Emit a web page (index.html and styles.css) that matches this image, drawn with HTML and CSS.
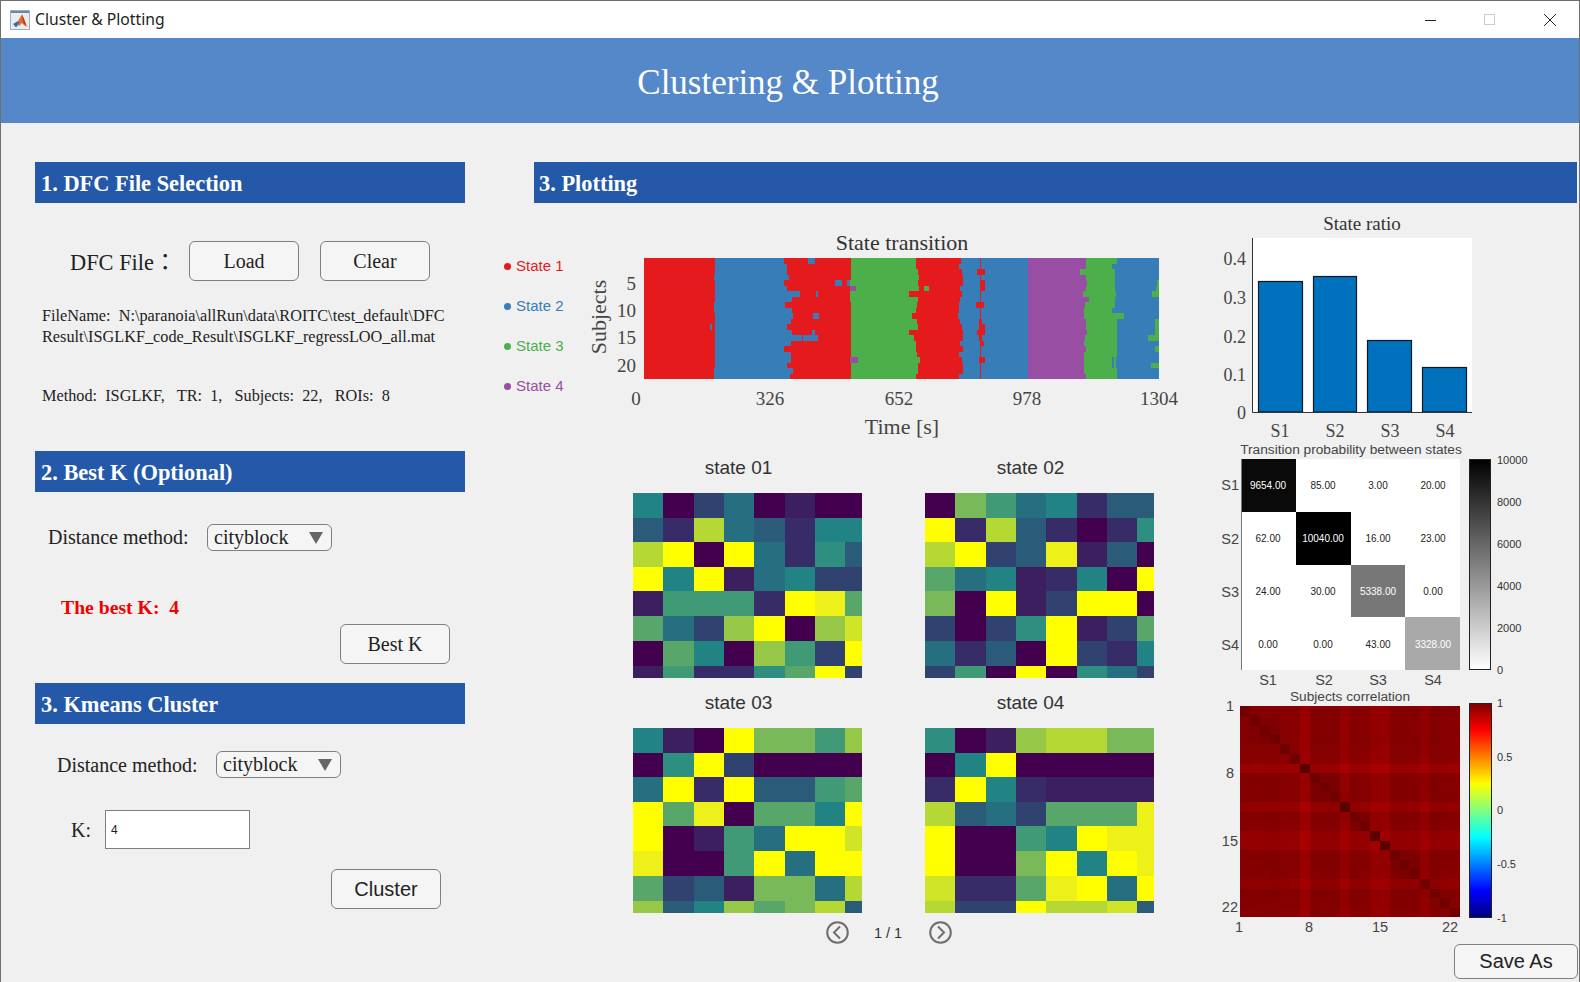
FILE: index.html
```html
<!DOCTYPE html>
<html lang="en">
<head>
  <meta charset="UTF-8">
  <title>Cluster &amp; Plotting</title>
  <link rel="stylesheet" href="styles.css">
</head>
<body>
<div class="window">
  <div class="titlebar">
    <svg class="app-icon" width="20" height="20" viewBox="0 0 20 20">
      <rect x="0.5" y="0.5" width="19" height="19" fill="#e8edf2" stroke="#a3adb8"/>
      <rect x="1" y="1" width="18" height="2" fill="#6488b0"/>
      <path d="M3 14 L8 11 L10 12.5 L8 15 L6 17.5 Z" fill="#3f6c9c"/>
      <path d="M8 11 L12 4.5 L14 9 L16.5 15.5 L18 17 L14.5 15.5 L12 13 L9 16 L8 15 L10 12.5 Z" fill="#e8682a"/>
      <path d="M12 4.5 L14 9 L16.5 15.5 L13.5 13.5 L12.5 9 Z" fill="#c5391b"/>
    </svg>
    <span class="app-title">Cluster &amp; Plotting</span>
    <div class="win-buttons">
      <svg width="12" height="12" viewBox="0 0 12 12"><path d="M0 6.5H11" stroke="#222" fill="none"/></svg>
      <svg width="12" height="12" viewBox="0 0 12 12"><rect x="0.5" y="0.5" width="10" height="10" stroke="#ccc" fill="none"/></svg>
      <svg width="14" height="14" viewBox="0 0 14 14"><path d="M1 1L13 13M13 1L1 13" stroke="#222" fill="none"/></svg>
    </div>
  </div>

  <div class="banner">Clustering &amp; Plotting</div>

  <div class="main">
    <div class="left-panel">
      <div class="section-head">1. DFC File Selection</div>
      <div class="file-row">
        <span class="label">DFC File<span class="cjk-colon">：</span></span>
        <button class="btn">Load</button>
        <button class="btn">Clear</button>
      </div>
      <p class="info file-name">FileName:&nbsp; N:\paranoia\allRun\data\ROITC\test_default\DFC<br>Result\ISGLKF_code_Result\ISGLKF_regressLOO_all.mat</p>
      <p class="info method">Method:&nbsp; ISGLKF,&nbsp;&nbsp; TR:&nbsp; 1,&nbsp;&nbsp; Subjects:&nbsp; 22,&nbsp;&nbsp; ROIs:&nbsp; 8</p>

      <div class="section-head head-k">2. Best K (Optional)</div>
      <div class="method-row row-k">
        <span class="label">Distance method:</span>
        <div class="dropdown"><span>cityblock</span><i class="arrow"></i></div>
      </div>
      <p class="best-k">The best K:&nbsp; 4</p>
      <button class="btn btn-best">Best K</button>

      <div class="section-head head-cluster">3. Kmeans Cluster</div>
      <div class="method-row row-cluster">
        <span class="label">Distance method:</span>
        <div class="dropdown"><span>cityblock</span><i class="arrow"></i></div>
      </div>
      <div class="k-row">
        <span class="label">K:</span>
        <input class="k-input" type="text" value="4">
      </div>
      <button class="btn btn-cluster">Cluster</button>
    </div>

    <div class="right-panel">
      <div class="section-head head-plot">3. Plotting</div>
      <div class="plot-area">
        <ul class="legend">
          <li class="s1">State 1</li>
          <li class="s2">State 2</li>
          <li class="s3">State 3</li>
          <li class="s4">State 4</li>
        </ul>

        <div class="center-col">
          <svg class="chart serif" width="630" height="220" viewBox="570 225 630 220">
            <g id="transition" shape-rendering="crispEdges"></g>
            <text class="ttl" x="902" y="250" text-anchor="middle">State transition</text>
            <text class="tk" x="636" y="290" text-anchor="end">5</text>
            <text class="tk" x="636" y="317" text-anchor="end">10</text>
            <text class="tk" x="636" y="344" text-anchor="end">15</text>
            <text class="tk" x="636" y="372" text-anchor="end">20</text>
            <text class="tk" x="636" y="405" text-anchor="middle">0</text>
            <text class="tk" x="770" y="405" text-anchor="middle">326</text>
            <text class="tk" x="899" y="405" text-anchor="middle">652</text>
            <text class="tk" x="1027" y="405" text-anchor="middle">978</text>
            <text class="tk" x="1159" y="405" text-anchor="middle">1304</text>
            <text class="lbl" x="902" y="434" text-anchor="middle">Time [s]</text>
            <text class="lbl" transform="translate(606 317) rotate(-90)" text-anchor="middle">Subjects</text>
          </svg>

          <div class="heat-grid">
            <div class="heat-card"><div class="heat-title">state 01</div><svg class="heat" id="heat1" width="229" height="185"></svg></div>
            <div class="heat-card"><div class="heat-title">state 02</div><svg class="heat" id="heat2" width="229" height="185"></svg></div>
            <div class="heat-card"><div class="heat-title">state 03</div><svg class="heat" id="heat3" width="229" height="185"></svg></div>
            <div class="heat-card"><div class="heat-title">state 04</div><svg class="heat" id="heat4" width="229" height="185"></svg></div>
          </div>

          <div class="pager">
            <svg width="23" height="23" viewBox="0 0 23 23"><circle cx="11.5" cy="11.5" r="10.3" fill="none" stroke="#6e6e6e" stroke-width="2"/><path d="M14 5.5L8 11.5L14 17.5" fill="none" stroke="#6e6e6e" stroke-width="2"/></svg>
            <span class="page-no">1 / 1</span>
            <svg width="23" height="23" viewBox="0 0 23 23"><circle cx="11.5" cy="11.5" r="10.3" fill="none" stroke="#6e6e6e" stroke-width="2"/><path d="M9 5.5L15 11.5L9 17.5" fill="none" stroke="#6e6e6e" stroke-width="2"/></svg>
          </div>
        </div>

        <div class="side-col">
          <svg class="chart serif" width="379" height="228" viewBox="1200 212 379 228">
            <rect x="1253" y="238" width="219" height="174" fill="#fff"/>
            <text class="ttl-s" x="1362" y="230" text-anchor="middle">State ratio</text>
            <g fill="#0072bd" stroke="#0d1a26" stroke-width="1.2">
              <rect x="1258.5" y="281.5" width="44" height="130.5"/>
              <rect x="1313.5" y="276.5" width="43" height="135.5"/>
              <rect x="1367.5" y="340.5" width="44" height="71.5"/>
              <rect x="1422.5" y="367.5" width="44" height="44.5"/>
            </g>
            <path d="M1252.5 238V412.5H1472" fill="none" stroke="#333" stroke-width="1"/>
            <g class="tk-s" text-anchor="end">
              <text x="1246" y="265">0.4</text>
              <text x="1246" y="304">0.3</text>
              <text x="1246" y="343">0.2</text>
              <text x="1246" y="381">0.1</text>
              <text x="1246" y="419">0</text>
            </g>
            <g class="tk-s" text-anchor="middle">
              <text x="1280" y="437">S1</text>
              <text x="1335" y="437">S2</text>
              <text x="1390" y="437">S3</text>
              <text x="1445" y="437">S4</text>
            </g>
          </svg>

          <svg class="chart sans" width="379" height="250" viewBox="1200 440 379 250">
            <text class="ttl-m" x="1351" y="454" text-anchor="middle">Transition probability between states</text>
            <g shape-rendering="crispEdges">
              <rect x="1241" y="459" width="219" height="211" fill="#fff"/>
              <rect x="1241" y="459" width="55" height="53" fill="#0a0a0a"/>
              <rect x="1296" y="512" width="55" height="53" fill="#000"/>
              <rect x="1351" y="565" width="54" height="52" fill="#777"/>
              <rect x="1405" y="617" width="55" height="53" fill="#a9a9a9"/>
            </g>
            <path d="M1241.5 459V670" stroke="#777" fill="none"/>
            <g class="cell" text-anchor="middle">
              <text x="1268" y="489" fill="#fff">9654.00</text><text x="1323" y="489">85.00</text><text x="1378" y="489">3.00</text><text x="1433" y="489">20.00</text>
              <text x="1268" y="542">62.00</text><text x="1323" y="542" fill="#fff">10040.00</text><text x="1378" y="542">16.00</text><text x="1433" y="542">23.00</text>
              <text x="1268" y="595">24.00</text><text x="1323" y="595">30.00</text><text x="1378" y="595" fill="#fff">5338.00</text><text x="1433" y="595">0.00</text>
              <text x="1268" y="648">0.00</text><text x="1323" y="648">0.00</text><text x="1378" y="648">43.00</text><text x="1433" y="648" fill="#fff">3328.00</text>
            </g>
            <g class="tk-m" text-anchor="end">
              <text x="1239" y="490">S1</text>
              <text x="1239" y="544">S2</text>
              <text x="1239" y="597">S3</text>
              <text x="1239" y="650">S4</text>
            </g>
            <g class="tk-m" text-anchor="middle">
              <text x="1268" y="685">S1</text>
              <text x="1324" y="685">S2</text>
              <text x="1378" y="685">S3</text>
              <text x="1433" y="685">S4</text>
            </g>
            <defs>
              <linearGradient id="grayBar" x1="0" y1="0" x2="0" y2="1"><stop offset="0" stop-color="#000"/><stop offset="1" stop-color="#fff"/></linearGradient>
              <linearGradient id="jetBar" x1="0" y1="0" x2="0" y2="1">
                <stop offset="0" stop-color="#7f0000"/><stop offset="0.125" stop-color="#ff0000"/><stop offset="0.375" stop-color="#ffff00"/>
                <stop offset="0.625" stop-color="#00ffff"/><stop offset="0.875" stop-color="#0000ff"/><stop offset="1" stop-color="#00007f"/>
              </linearGradient>
            </defs>
            <rect x="1469.5" y="459.5" width="21" height="210" fill="url(#grayBar)" stroke="#222"/>
            <g class="bar-tk">
              <text x="1497" y="464">10000</text><text x="1497" y="506">8000</text><text x="1497" y="548">6000</text>
              <text x="1497" y="590">4000</text><text x="1497" y="632">2000</text><text x="1497" y="674">0</text>
            </g>
          </svg>

          <svg class="chart sans" width="379" height="245" viewBox="1200 690 379 245">
            <text class="ttl-m" x="1350" y="701" text-anchor="middle">Subjects correlation</text>
            <g id="corr" shape-rendering="crispEdges"></g>
            <g class="tk-m" text-anchor="end">
              <text x="1234" y="711">1</text>
              <text x="1234" y="778">8</text>
              <text x="1238" y="846">15</text>
              <text x="1238" y="912">22</text>
            </g>
            <g class="tk-m" text-anchor="middle">
              <text x="1239" y="932">1</text>
              <text x="1309" y="932">8</text>
              <text x="1380" y="932">15</text>
              <text x="1450" y="932">22</text>
            </g>
            <rect x="1469.5" y="703.5" width="22" height="214" fill="url(#jetBar)" stroke="#222"/>
            <g class="bar-tk">
              <text x="1497" y="707">1</text><text x="1497" y="761">0.5</text><text x="1497" y="814">0</text>
              <text x="1497" y="868">-0.5</text><text x="1497" y="922">-1</text>
            </g>
          </svg>

          <button class="btn btn-save">Save As</button>
        </div>
      </div>
    </div>
  </div>
</div>
<script src="script.js"></script>
</body>
</html>
```

FILE: styles.css
```css
* { box-sizing: border-box; }
body {
  margin: 0;
  background: #f0f0f0;
  font-family: "Liberation Serif", serif;
  color: #222;
}
.window {
  width: 1580px;
  height: 982px;
  border: 1px solid #6f6f6f;
  border-bottom: 0;
  background: #f0f0f0;
  overflow: hidden;
}
.titlebar {
  height: 37px;
  background: #fff;
  display: flex;
  align-items: center;
  padding-left: 9px;
}
.app-title {
  margin: -2px 0 0 5px;
  font-family: "Noto Sans", sans-serif;
  font-size: 15.7px;
  color: #222;
}
.win-buttons {
  margin-left: auto;
  display: flex;
  align-items: center;
  gap: 47px;
  padding-right: 22px;
}
.banner {
  height: 85px;
  background: #5588c9;
  color: #fff;
  font-size: 35px;
  display: flex;
  align-items: center;
  justify-content: center;
  padding: 4px 4px 0 0;
}
.main { display: flex; }
.left-panel {
  width: 499px;
  padding: 39px 35px 0 34px;
}
.section-head {
  height: 41px;
  background: #2459a9;
  color: #fff;
  font-size: 22.4px;
  font-weight: bold;
  display: flex;
  align-items: center;
  padding: 3px 0 0 6px;
}
.label { font-size: 20px; }
.btn {
  width: 110px;
  height: 40px;
  padding: 0;
  background: #f5f5f5;
  border: 1px solid #7f7f7f;
  border-radius: 6px;
  font-family: "Liberation Serif", serif;
  font-size: 20px;
  color: #222;
}
.file-row {
  display: flex;
  align-items: center;
  margin-top: 38px;
  padding-left: 35px;
}
.file-row .label { font-size: 22.4px; width: 119px; white-space: nowrap; margin-top: 4px; }
.cjk-colon { font-family: "Noto Sans CJK TC", serif; line-height: 0; }
.file-row .btn + .btn { margin-left: 21px; }
.info {
  margin: 0;
  padding-left: 7px;
  font-size: 16.25px;
  line-height: 21px;
  white-space: nowrap;
}
.file-name { margin-top: 25px; }
.method { margin-top: 38px; }
.head-k { margin-top: 44px; }
.method-row { display: flex; align-items: center; }
.dropdown {
  width: 125px;
  height: 27px;
  background: #f5f5f5;
  border: 1px solid #7f7f7f;
  border-radius: 6px;
  display: flex;
  align-items: center;
  justify-content: space-between;
  padding: 0 8px 0 6px;
  font-size: 20px;
}
.arrow {
  border-left: 7px solid transparent;
  border-right: 7px solid transparent;
  border-top: 12px solid #666;
}
.method-row .label { width: 159px; }
.row-k { margin-top: 32px; padding-left: 13px; }
.row-cluster { margin-top: 27px; padding-left: 22px; }
.row-cluster .label { padding-top: 2px; }
.best-k {
  margin: 45px 0 0 0;
  padding-left: 26px;
  color: #f00000;
  font-size: 19.7px;
  font-weight: bold;
  line-height: 22px;
}
.btn-best { display: block; margin: 6px 0 0 305px; }
.head-cluster { margin-top: 19px; }
.k-row { display: flex; align-items: center; margin-top: 32px; padding-left: 36px; }
.k-row .label { width: 34px; padding-top: 2px; }
.k-input {
  width: 145px;
  height: 39px;
  background: #fff;
  border: 1px solid #7f7f7f;
  padding: 0 5px;
  font-family: "Liberation Sans", sans-serif;
  font-size: 12px;
  color: #222;
}
.btn-cluster {
  display: block;
  margin: 20px 0 0 296px;
  font-family: "Liberation Sans", sans-serif;
}

.right-panel { width: 1079px; }
.head-plot { margin: 39px 2px 0 34px; padding-left: 5px; }
.plot-area { display: flex; }
.legend {
  list-style: none;
  width: 70px;
  margin: 0;
  padding: 54px 0 0 4px;
  font-family: "Liberation Sans", sans-serif;
  font-size: 15px;
  display: flex;
  flex-direction: column;
  gap: 22px;
}
.legend li {
  height: 18px;
  line-height: 18px;
  display: flex;
  align-items: center;
  gap: 5px;
  white-space: nowrap;
}
.legend li::before {
  content: "";
  width: 7px;
  height: 7px;
  border-radius: 50%;
  background: currentColor;
}
.s1 { color: #e41a1c; }
.s2 { color: #377eb8; }
.s3 { color: #4daf4a; }
.s4 { color: #984ea3; }

.chart { display: block; overflow: visible; }
.chart.serif text { font-family: "Liberation Serif", serif; }
.chart.sans text { font-family: "Liberation Sans", sans-serif; }
.center-col { width: 630px; padding-top: 22px; }
.ttl { font-size: 22px; fill: #333; }
.tk { font-size: 19px; fill: #444; }
.lbl { font-size: 22px; fill: #444; }

.heat-grid {
  display: grid;
  grid-template-columns: 229px 229px;
  column-gap: 63px;
  row-gap: 12px;
  margin: 10px 0 0 63px;
}
.heat-title {
  height: 25px;
  line-height: 26px;
  margin-bottom: 13px;
  padding-right: 18px;
  text-align: center;
  font-family: "Liberation Sans", sans-serif;
  font-size: 19px;
  color: #333;
}
.heat { display: block; }
.pager {
  display: flex;
  align-items: center;
  margin: 8px 0 0 256px;
}
.page-no {
  width: 80px;
  padding-right: 2px;
  text-align: center;
  font-family: "Liberation Sans", sans-serif;
  font-size: 14.5px;
  color: #333;
}

.side-col { width: 379px; padding-top: 9px; }
.ttl-s { font-size: 19px; fill: #333; }
.tk-s { font-size: 18px; fill: #444; }
.ttl-m { font-size: 13.7px; fill: #444; }
.tk-m { font-size: 14.5px; fill: #444; }
.cell { font-size: 10px; fill: #222; }
.bar-tk { font-size: 11px; fill: #333; }
.btn-save {
  display: block;
  width: 124px;
  height: 35px;
  margin: 9px 1px 0 auto;
  font-family: "Liberation Sans", sans-serif;
}
```

FILE: script.js
```js
const SVG_NS = 'http://www.w3.org/2000/svg';
const RED = '#e41a1c', BLUE = '#377eb8', GREEN = '#4daf4a', PURPLE = '#984ea3';

function addRect(parent, x, y, w, h, fill) {
  const r = document.createElementNS(SVG_NS, 'rect');
  r.setAttribute('x', x);
  r.setAttribute('y', y);
  r.setAttribute('width', w);
  r.setAttribute('height', h);
  r.setAttribute('fill', fill);
  parent.appendChild(r);
}

// state transition: one row per subject, state change points in page px
const changes = [
  [715, 784, 851, 916, 961, 1028, 1086, 1117],
  [715, 787, 851, 916, 959, 1028, 1086, 1113],
  [715, 787, 851, 918, 962, 1028, 1080, 1115],
  [714, 789, 851, 919, 963, 1028, 1086, 1115],
  [715, 784, 850, 918, 963, 1028, 1087, 1115],
  [715, 787, 850, 919, 960, 1028, 1086, 1115],
  [715, 800, 850, 909, 962, 1028, 1083, 1116],
  [715, 792, 850, 918, 960, 1028, 1089, 1115],
  [714, 785, 851, 917, 959, 1028, 1085, 1115],
  [714, 792, 851, 916, 959, 1028, 1084, 1112],
  [715, 793, 851, 912, 958, 1028, 1084, 1124],
  [715, 791, 851, 917, 960, 1028, 1086, 1117],
  [715, 787, 851, 918, 962, 1028, 1086, 1117],
  [715, 792, 851, 909, 963, 1028, 1087, 1117],
  [715, 802, 851, 914, 963, 1028, 1085, 1117],
  [715, 791, 851, 916, 960, 1028, 1084, 1117],
  [715, 784, 851, 916, 963, 1028, 1086, 1117],
  [715, 791, 851, 917, 959, 1028, 1084, 1117],
  [715, 791, 851, 920, 962, 1028, 1084, 1116],
  [715, 787, 851, 918, 963, 1028, 1084, 1116],
  [714, 793, 851, 918, 963, 1028, 1084, 1117],
  [714, 790, 851, 916, 959, 1028, 1086, 1117]
];
const order = [RED, BLUE, RED, GREEN, RED, BLUE, PURPLE, GREEN, BLUE];

// short visits inside the long segments: row, from, to, colour
const patches = [
  [0, 808, 815, BLUE], [4, 835, 842, BLUE], [4, 847, 850, BLUE], [5, 850, 856, PURPLE],
  [6, 816, 818, BLUE], [10, 813, 819, BLUE], [13, 812, 815, BLUE], [14, 803, 818, BLUE],
  [18, 850, 858, PURPLE], [12, 710, 712, BLUE], [5, 924, 929, GREEN],
  [2, 977, 985, RED], [4, 981, 985, RED], [5, 981, 985, RED], [8, 976, 984, RED],
  [11, 979, 982, RED], [12, 979, 985, RED], [13, 977, 985, RED], [14, 979, 982, RED],
  [15, 980, 984, RED], [18, 979, 985, RED],
  [4, 1157, 1159, GREEN], [5, 1156, 1159, GREEN], [6, 1152, 1159, GREEN],
  [11, 1155, 1159, GREEN], [12, 1155, 1159, GREEN], [13, 1155, 1159, GREEN],
  [14, 1148, 1159, GREEN], [16, 1155, 1159, GREEN], [19, 1151, 1159, GREEN],
  [1, 1112, 1114, BLUE], [18, 1112, 1114, BLUE], [19, 1112, 1114, BLUE]
];

function drawTransition() {
  const g = document.getElementById('transition');
  const top = 258, rowH = 121 / 22, left = 644, right = 1159;
  changes.forEach((row, i) => {
    const y = Math.round(top + i * rowH);
    const h = Math.round(top + (i + 1) * rowH) - y;
    let start = left;
    row.concat(right).forEach((end, s) => {
      addRect(g, start, y, end - start, h, order[s]);
      start = end;
    });
    addRect(g, 980, y, 1, h, RED);
  });
  patches.forEach(([row, a, b, color]) => {
    const y = Math.round(top + row * rowH);
    const h = Math.round(top + (row + 1) * rowH) - y;
    addRect(g, a, y, b - a, h, color);
  });
}

// heat maps: each digit is a step on the palette below
const palette = ['#42004f', '#3b1f5f', '#382c68', '#2f4270', '#2a5c7a', '#266f80', '#218384', '#2e8f80',
                 '#409a75', '#58a66a', '#79b95a', '#97c747', '#b5d835', '#d0e428', '#eef019', '#ffff00'];
const heatmaps = {
  heat1: ['60350100', '42c54266', 'cf0f5274', 'f6f15633', '18882fe9', '953bf0bd', '0960b83f', '182279f3'],
  heat2: ['0a856244', 'f2c42027', 'cf34e140', '9561260f', 'a0f13ff0', '3037f139', '5240f326', '380f0753'],
  heat3: ['610faa8b', '07f30000', '5f2f4489', 'f9e0996f', 'f0185ffd', 'e008f5ff', '9341aa5c', 'b46b9ac4'],
  heat4: ['701bccaa', '06f00000', '2f621111', 'c453999e', 'f0086fee', 'f00af6fe', 'd229ef5f', 'c33fccd4']
};

function drawHeatmaps() {
  const xs = [0, 30, 61, 91, 121, 152, 182, 212, 229];
  const ys = [0, 25, 49, 74, 98, 123, 148, 173, 185];
  Object.keys(heatmaps).forEach((id) => {
    const svg = document.getElementById(id);
    svg.setAttribute('shape-rendering', 'crispEdges');
    heatmaps[id].forEach((cells, r) => {
      for (let c = 0; c < 8; c++) {
        addRect(svg, xs[c], ys[r], xs[c + 1] - xs[c], ys[r + 1] - ys[r], palette[parseInt(cells[c], 16)]);
      }
    });
  });
}

// subject correlation: all close to 1, a few subjects a little lower
function drawCorr() {
  const g = document.getElementById('corr');
  const light = [0, 2, 2, 0, 5, 5, 22, 0, 0, 2, 15, 0, 3, 15, 18, 0, 0, 2, 12, 0, 1, 3];
  const darkDiag = [6, 10, 13, 14];
  const blocks = [[7, 9], [11, 12], [15, 17], [1, 3]];
  for (let i = 0; i < 22; i++) {
    for (let j = 0; j < 22; j++) {
      let red = 0x80 + light[i] + light[j] + ((i + 1) * (j + 1)) % 5;
      blocks.forEach(([a, b]) => {
        if (i >= a && i <= b && j >= a && j <= b) red -= 7;
      });
      if (i === j) red = darkDiag.includes(i) ? 0x5a : 0x70;
      const x = 1240 + j * 10;
      const y = Math.round(706 + i * 9.61);
      const h = Math.round(706 + (i + 1) * 9.61) - y;
      addRect(g, x, y, 10, h, 'rgb(' + red + ',0,0)');
    }
  }
}

drawTransition();
drawHeatmaps();
drawCorr();
```
